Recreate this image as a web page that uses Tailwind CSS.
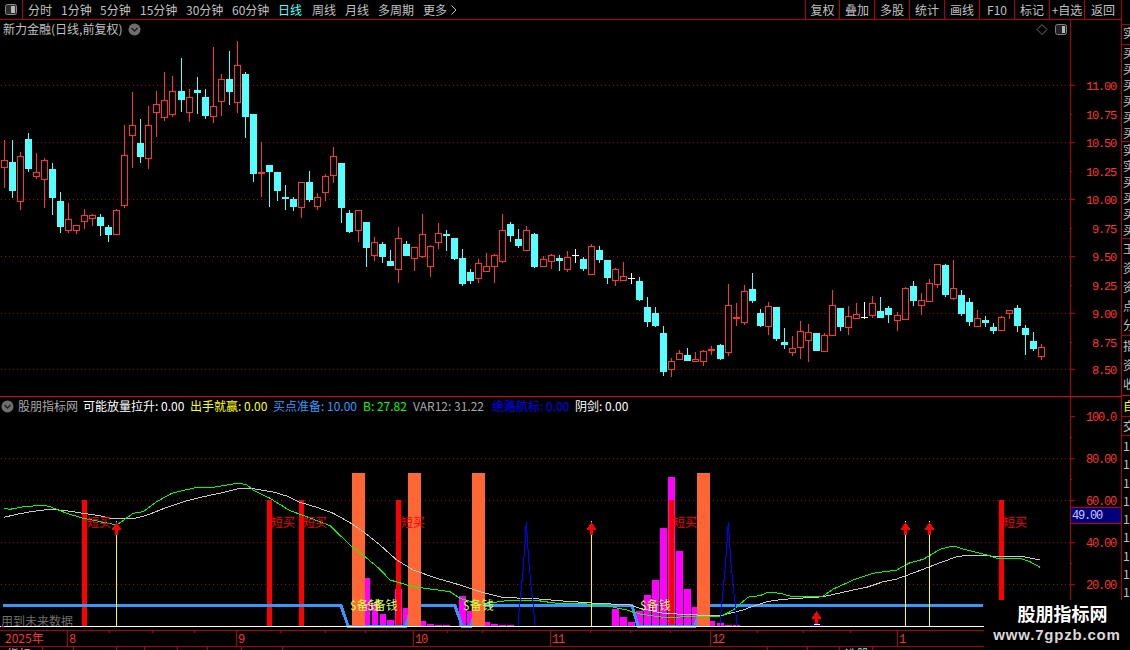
<!DOCTYPE html>
<html>
<head>
<meta charset="utf-8">
<script src="https://cdn.jsdelivr.net/npm/@tailwindcss/browser@4"></script>
</head>
<body class="bg-black">
<div class="relative flex w-[1130px] h-[650px] overflow-hidden bg-black text-[12px] leading-[16px] text-[#c0c0c0] font-['Noto_Sans_CJK_SC',sans-serif]">

  <!-- left: toolbar + panels -->
  <div class="w-[1122px] h-full border-r border-[#b00000] flex flex-col">
    <!-- toolbar -->
    <div class="h-[20px] border-b border-[#b00000] flex items-center shrink-0">
      <div class="w-[23px] h-[19px] border-r border-[#b00000] flex items-center justify-center">
        <svg width="13" height="12" viewBox="0 0 13 12"><rect x="0.5" y="0.5" width="11" height="10" rx="2" fill="#2c2c2c" stroke="#8a8a8a"/><rect x="6" y="2" width="4" height="7" fill="#b4b4b4"/></svg>
      </div>
      <div class="flex ml-[5px] whitespace-nowrap">
        <span class="w-[33px]">分时</span>
        <span class="w-[39px]">1分钟</span>
        <span class="w-[40px]">5分钟</span>
        <span class="w-[46px]">15分钟</span>
        <span class="w-[46px]">30分钟</span>
        <span class="w-[46px]">60分钟</span>
        <span class="w-[34px] text-[#54ffff]">日线</span>
        <span class="w-[33px]">周线</span>
        <span class="w-[33px]">月线</span>
        <span class="w-[45px]">多周期</span>
        <span class="flex items-center gap-[4px]">更多<svg width="6" height="10" viewBox="0 0 6 10"><path d="M0.5 0.5 L5 5 L0.5 9.5" fill="none" stroke="#c0c0c0"/></svg></span>
      </div>
      <div class="ml-auto flex h-[19px] whitespace-nowrap">
        <span class="w-[34px] border-l border-[#b00000] flex items-center justify-center">复权</span>
        <span class="w-[35px] border-l border-[#b00000] flex items-center justify-center">叠加</span>
        <span class="w-[35px] border-l border-[#b00000] flex items-center justify-center">多股</span>
        <span class="w-[35px] border-l border-[#b00000] flex items-center justify-center">统计</span>
        <span class="w-[35px] border-l border-[#b00000] flex items-center justify-center">画线</span>
        <span class="w-[35px] border-l border-[#b00000] flex items-center justify-center">F10</span>
        <span class="w-[35px] border-l border-[#b00000] flex items-center justify-center">标记</span>
        <span class="w-[35px] border-l border-[#b00000] flex items-center justify-center">+自选</span>
        <span class="w-[37px] border-l border-[#b00000] flex items-center justify-center">返回</span>
      </div>
    </div>

    <!-- price panel -->
    <div class="relative h-[376px] shrink-0">
      <svg class="absolute inset-0" width="1121" height="376" viewBox="0 20 1121 376" shape-rendering="crispEdges">
        <g id="grid1"></g>
        <rect x="1070" y="20" width="1" height="376" fill="#b00000"/>
        <g id="candles"></g>
        <g fill="#ff3232" font-family="Liberation Mono" font-size="12" letter-spacing="-1.2" text-anchor="end" text-rendering="geometricPrecision" shape-rendering="auto">
          <text x="1116" y="90">11.00</text>
          <text x="1116" y="119">10.75</text>
          <text x="1116" y="147">10.50</text>
          <text x="1116" y="176">10.25</text>
          <text x="1116" y="204">10.00</text>
          <text x="1116" y="233">9.75</text>
          <text x="1116" y="261">9.50</text>
          <text x="1116" y="290">9.25</text>
          <text x="1116" y="318">9.00</text>
          <text x="1116" y="347">8.75</text>
          <text x="1116" y="374">8.50</text>
        </g>
        <path d="M1042 24.5 L1047 29.5 L1042 34.5 L1037 29.5 Z" fill="none" stroke="#707070" shape-rendering="auto"/>
        <rect x="1055.5" y="24.5" width="11" height="10" rx="2" fill="#222" stroke="#808080" shape-rendering="auto"/>
        <rect x="1062" y="26" width="3" height="7" fill="#b4b4b4"/>
      </svg>
      <div class="relative flex items-center pl-[3px] h-[18px] whitespace-nowrap">
        <span class="w-[125px]">新力金融(日线,前复权)</span>
        <svg width="13" height="13" viewBox="0 0 13 13"><circle cx="6.5" cy="6.5" r="6" fill="#6e6e6e"/><path d="M3.5 5 L6.5 8 L9.5 5" fill="none" stroke="#1c1c1c" stroke-width="1.3"/></svg>
      </div>
    </div>

    <!-- indicator panel -->
    <div class="relative h-[234px] shrink-0 border-t border-[#e00000]">
      <svg class="absolute left-0 top-[-1px]" width="1121" height="234" viewBox="0 396 1121 234" shape-rendering="crispEdges">
        <g id="sub"></g>
        <g fill="#ff3232" font-family="Liberation Mono" font-size="12" letter-spacing="-1.2" text-anchor="end" shape-rendering="auto">
          <text x="1116" y="421">100.0</text>
          <text x="1116" y="463">80.00</text>
          <text x="1116" y="505">60.00</text>
          <text x="1116" y="547">40.00</text>
          <text x="1116" y="589">20.00</text>
        </g>
        <rect x="1071" y="507" width="50" height="17" fill="#00007f"/>
        <rect x="1071" y="507" width="50" height="1" fill="#c00000"/>
        <rect x="1071" y="523" width="50" height="1" fill="#c00000"/>
        <text x="1072" y="519" fill="#c8c8ff" font-family="Liberation Mono" font-size="12" letter-spacing="-1.2" shape-rendering="auto">49.00</text>
        <g fill="#ff0000" font-family="Noto Sans CJK SC" font-size="12" shape-rendering="auto">
          <text x="87" y="527">短买</text>
          <text x="271" y="527">短买</text>
          <text x="303" y="527">短买</text>
          <text x="401" y="527">短买</text>
          <text x="673" y="527">短买</text>
          <text x="1003" y="527">短买</text>
        </g>
        <g fill="#d8ff50" font-family="Noto Sans CJK SC" font-size="12" shape-rendering="auto">
          <text x="350" y="610">$备钱</text>
          <text x="367" y="610">$备钱</text>
          <text x="463" y="610">$备钱</text>
          <text x="640" y="610">$备钱</text>
        </g>
        <text x="1" y="626" fill="#6e6e6e" font-family="Noto Sans CJK SC" font-size="12" shape-rendering="auto">用到未来数据</text>
        <rect x="0" y="626" width="984" height="1" fill="#ffffff"/>
        <rect x="1" y="626" width="3" height="1" fill="#ff00ff"/>
      </svg>
      <div class="relative flex items-center h-[16px] mt-[1px] whitespace-nowrap">
        <span class="w-[15px] flex justify-center"><svg width="13" height="13" viewBox="0 0 13 13"><circle cx="6.5" cy="6.5" r="6" fill="#6e6e6e"/><path d="M3.5 5 L6.5 8 L9.5 5" fill="none" stroke="#1c1c1c" stroke-width="1.3"/></svg></span>
        <span class="w-[68px] pl-[3px] text-[#a8a8a8]">股朋指标网</span>
        <span class="w-[107px] text-white">可能放量拉升: 0.00</span>
        <span class="w-[83px] text-[#ffff00]">出手就赢: 0.00</span>
        <span class="w-[90px] text-[#3399ff]">买点准备: 10.00</span>
        <span class="w-[50px] text-[#00ff00]">B: 27.82</span>
        <span class="w-[79px] text-[#a8a8a8]">VAR12: 31.22</span>
        <span class="w-[83px] text-[#0000ff]">绝路航标: 0.00</span>
        <span class="text-white">阴剑: 0.00</span>
      </div>
    </div>

    <!-- time axis -->
    <div class="relative h-[17px] shrink-0 border-y border-[#b00000]">
      <svg class="absolute left-0 top-[-1px]" width="1121" height="17" viewBox="0 630 1121 17" shape-rendering="crispEdges">
        <g fill="#b00000">
          <rect x="67" y="630" width="1" height="17"/><rect x="236" y="630" width="1" height="17"/><rect x="413" y="630" width="1" height="17"/><rect x="550" y="630" width="1" height="17"/><rect x="710" y="630" width="1" height="17"/><rect x="897" y="630" width="1" height="17"/>
          <rect x="109" y="630" width="1" height="3"/><rect x="152" y="630" width="1" height="3"/><rect x="194" y="630" width="1" height="3"/><rect x="280" y="630" width="1" height="3"/><rect x="325" y="630" width="1" height="3"/><rect x="365" y="630" width="1" height="3"/><rect x="447" y="630" width="1" height="3"/><rect x="482" y="630" width="1" height="3"/><rect x="590" y="630" width="1" height="3"/><rect x="630" y="630" width="1" height="3"/><rect x="670" y="630" width="1" height="3"/><rect x="757" y="630" width="1" height="3"/><rect x="803" y="630" width="1" height="3"/><rect x="850" y="630" width="1" height="3"/>
        </g>
        <g fill="#ff3232" font-family="Liberation Mono" font-size="12" letter-spacing="-1.2" shape-rendering="auto">
          <text x="69" y="643">8</text><text x="238" y="643">9</text><text x="415" y="643">10</text><text x="552" y="643">11</text><text x="712" y="643">12</text><text x="899" y="643">1</text>
        </g>
        <text x="5" y="643" fill="#ff3232" font-family="Noto Sans CJK SC" font-size="12" shape-rendering="auto">2025年</text>
      </svg>
    </div>
    <!-- bottom tab row, cut by the window -->
    <div class="flex-1 flex overflow-hidden whitespace-nowrap">
      <span class="w-[43px] border-r border-[#b00000] pl-[7px] -mt-[1px] h-[20px]">指标</span>
      <span class="w-[31px] border-r border-[#b00000]"></span>
      <span class="w-[43px] border-r border-[#b00000]"></span>
      <span class="w-[28px] border-r border-[#b00000]"></span>
      <span class="w-[33px] border-r border-[#b00000]"></span>
      <span class="w-[30px] border-r border-[#b00000]"></span>
      <span class="w-[34px] border-r border-[#b00000]"></span>
      <span class="w-[41px] border-r border-[#b00000]"></span>
      <span class="w-[485px] border-r border-[#b00000]"></span>
      <span class="w-[40px] border-r border-[#b00000]"></span>
      <span class="w-[32px] border-r border-[#b00000]"></span>
      <span class="w-[33px] border-r border-[#b00000] pl-[5px] -mt-[1px] h-[20px] text-[#54ffff]">选股</span>
    </div>
  </div>

  <!-- right edge strip, cut by the window -->
  <div class="w-[8px] h-full overflow-hidden flex flex-col whitespace-nowrap leading-[16px]">
    <div class="h-[25px] border-b border-[#b00000] shrink-0"></div>
    <div class="h-[20px] border-b border-[#b00000] shrink-0 pl-[1px]">实</div>
    <div class="h-[97px] border-b border-[#b00000] shrink-0 pl-[1px]">买<br>买<br>买<br>买<br>买<br>买</div>
    <div class="h-[97px] border-b border-[#b00000] shrink-0 pl-[1px]">实<br>实<br>买<br>买<br>买<br>买</div>
    <div class="h-[97px] border-b border-[#b00000] shrink-0 pl-[1px] leading-[19px]">王<br>资<br>资<br>点<br>分</div>
    <div class="h-[60px] border-b border-[#e00000] shrink-0 pl-[1px] leading-[19px]">指<br>资<br>收</div>
    <div class="h-[21px] border-b border-[#b00000] shrink-0 pl-[1px] text-[#ffff00] leading-[20px]">自</div>
    <div class="h-[19px] border-b border-[#b00000] shrink-0 pl-[1px] leading-[18px]">交</div>
    <div class="pl-[1px] pt-[1px] leading-[18.3px]">1<br>1<br>1<br>1<br>1<br>1<br>1<br>1<br>1</div>
  </div>

  <!-- watermark lying over the corner -->
  <div class="absolute right-0 bottom-0 w-[146px] h-[50px] bg-black flex flex-col items-center whitespace-nowrap">
    <span class="text-[18px] leading-[26px] font-bold text-white pl-[11px]">股朋指标网</span>
    <span class="text-[15px] leading-[18px] font-bold tracking-[0.8px] text-[#d8d8d8] font-['Liberation_Sans',sans-serif]">www.7gpzb.com</span>
  </div>
</div>

<script>
// candle data: colour, high, body top, body bottom, low (measured rows)
var D=[
[40,'R',300,361,383,444,'C',300,366,453,474,'R',336,349,485,510,'C',279,297,387,396,'R',339,397,410,417,'R',354,361,419,504,'C',369,387,474,525,'C',456,483,561,579,'R',489,538,572,579,'R',556,556,572,582,'R',507,526,545,567,'R',522,526,536,558,'C',522,531,558,588,'C',555,561,585,606,'R',508,511,584,584,'R',255,346,497,504,'R',156,256,287,384,'C',237,309,351,369,'R',198,256,356,387,'R',153,193,218,291,'R',96,181,233,243,'R',108,154,224,231,'C',54,153,180,216,'R',147,172,218,246,'C',111,150,159,222,'C',147,171,228,237,'R',21,199,230,249,'R',102,118,185,228,'C',33,117,156,195,'R',3,76,188,219,'C',96,102,231,294,'C',222,222,402,426,'R',306,397,401,471,'C',375,375,396,501,'C',396,396,453,483,'C',435,471,477,510,'C',471,477,501,513,'R',427,427,503,534,'C',393,426,480,486,'R',460,472,500,510,'R',402,409,458,483,'R',321,349,407,429,'C',369,369,504,549,'C',510,519,576,580],
[200,'R',30,31,92,126,'C',66,66,144,201,'R',111,127,167,183,'C',127,132,171,189,'C',150,183,198,198,'R',81,115,209,249,'C',123,132,168,168,'R',142,142,176,213,'R',42,103,170,174,'R',136,139,200,231,'R',69,100,128,147,'C',90,102,108,153,'C',114,114,177,180,'C',147,174,252,258,'C',207,216,243,252,'R',177,190,236,249,'R',159,199,215,215,'R',162,166,200,249,'R',42,91,185,189,'C',66,72,108,126,'C',87,117,138,144,'R',78,91,152,152,'C',99,102,201,204,'R',168,178,200,200,'R',162,166,185,207,'C',165,174,183,213,'R',153,172,209,216,'W',147,165,167,189,'C',171,177,207,213,'R',132,139,224,224,'C',138,150,180,189,'C',180,180,234,252,'R',204,208,242,258,'R',186,229,242,242,'W',219,234,236,252,'C',231,243,300,303,'C',291,321,366,381,'C',321,339,378,381,'C',378,399,516,528,'R',474,484,510,531,'R',450,460,480,480,'C',444,465,483,483,'R',456,478,485,485],
[250,'R',300,304,335,348,'R',289,298,304,315,'C',282,285,327,330,'R',102,166,308,318,'R',159,202,206,228,'R',105,124,218,225,'C',69,117,153,159,'C',177,189,228,231,'R',156,169,230,255,'C',171,171,267,273,'C',234,276,285,297,'R',258,295,308,318,'R',213,244,293,327,'R',222,247,272,336,'C',249,249,303,303,'R',249,256,305,305,'R',120,166,257,257,'C',174,174,231,243,'R',168,199,233,255,'R',159,193,206,206,'W',156,202,204,207,'R',138,160,197,204,'C',141,183,204,204,'C',168,174,195,219,'R',186,196,212,243,'R',111,115,209,209,'C',93,108,153,168,'R',129,151,167,195,'R',87,100,155,155,'R',43,43,104,114,'C',42,45,135,141,'R',30,115,147,150,'C',120,135,192,198,'C',144,156,216,228,'R',180,205,230,231,'C',198,210,219,231,'C',219,231,243,252,'R',198,202,242,242,'R',180,181,193,207,'C',165,174,228,246,'C',225,234,255,315,'C',246,273,297,303,'R',282,292,320,330]
];
function R(x,y,w,h,f){return '<rect x="'+x+'" y="'+y+'" width="'+w+'" height="'+Math.max(h,0)+'" fill="'+f+'"/>';}
var s='',i=0;
D.forEach(function(g){
  var o=g[0];
  for(var k=1;k<g.length;k+=5){
    var t=g[k],hi=o+Math.round(g[k+1]/3),to=o+Math.round(g[k+2]/3),bo=o+Math.round(g[k+3]/3),lo=o+Math.round(g[k+4]/3);
    var x=4+8*i+(i>=22)+(i>=44)+(i>=67)+(i>=89)+(i>=111);
    if(t=='C'){
      s+=R(x,hi,1,lo-hi,'#54ffff')+R(x-3,to,7,Math.max(bo-to,2),'#54ffff');
    }else if(t=='W'){
      s+=R(x,hi,1,lo-hi,'#ffffff')+R(x-3,to,7,1,'#ffffff');
    }else{
      var c='#ff3232';
      s+=R(x,hi,1,to-hi,c)+R(x,bo,1,lo-bo,c);
      if(bo-to<3){s+=R(x-3,to,7,Math.max(bo-to,2),c);}
      else{s+='<rect x="'+(x-2.5)+'" y="'+(to+.5)+'" width="6" height="'+(bo-to-1)+'" fill="none" stroke="'+c+'"/>';}
    }
    i++;
  }
});
document.getElementById('candles').innerHTML=s;

function dots(ys){var r='';ys.forEach(function(y){for(var x=1;x<1070;x+=4){r+=R(x,y,1,1,'#a00000');}});return r;}
function ticks(list,w){var r='';list.forEach(function(y){r+=R(1070,y,w,1,'#b00000');});return r;}
document.getElementById('grid1').innerHTML=dots([85,142,199,256,313,369])+ticks([85,142,199,256,313,369],5)+ticks([114,171,228,285,342],2);

// indicator panel
var h='';
h+=dots([458,500,542,584]);
h+=R(1070,397,1,203,'#b00000')+ticks([416,458,500,542,584],5)+ticks([437,479,521,563],2);
// magenta volume columns: x, width, top
[[365,5,578],[372,6,603],[380,6,614],[387,7,620],[395,7,589],[403,5,608],[421,5,621],[427,7,624],[435,7,625],[443,7,625],[459,7,596],[467,5,611],[485,5,622],[491,7,624],[499,7,625],[507,7,625],[612,7,609],[620,7,617],[628,7,622],[636,7,611],[644,7,595],[652,7,580],[660,7,528],[668,7,477],[676,7,551],[684,7,589],[692,5,607],[710,5,621],[717,7,623],[725,7,625],[733,7,625]].forEach(function(b){h+=R(b[0],b[2],b[1],626-b[2],'#ff00ff');});
// red bars
[82,267,299,396,669,999].forEach(function(x){h+=R(x,500,5,126,'#ff0000');});
// thick blue line
h+='<polyline fill="none" stroke="#3399ff" stroke-width="3" points="3,605.5 341,605.5 348,626 406,626 412,605.5 455,605.5 462,626 471,626 477,605.5 632,605.5 638,626 695,626 701,605.5 983,605.5"/>';
// orange bars
[352,408,472,697].forEach(function(x){h+=R(x,473,13,153,'#ff6633');});
function pts(o,a){var r='';for(var k=0;k<a.length;k+=2){r+=(o[0]+a[k]/3).toFixed(1)+','+(o[1]+a[k+1]/3).toFixed(1)+' ';}return r;}
var gray=pts([0,470],[12,142,50,133,100,124,150,118,190,121,250,130,300,137,340,147,400,146,440,136,500,112,560,92,620,78,680,65,720,55,760,56,820,66,860,78,900,97,950,112,1000,130,1050,158,1090,185,1140,225])
 +pts([380,470],[50,270,100,300,170,325,240,345,300,365,370,383,450,385,550,393,650,400,750,405,780,415,850,430,950,435,1020,437,1090,420])
 +pts([750,390],[0,652,50,635,100,628,220,620,300,602,350,592,400,575,440,567,500,545,560,522,620,500,660,495,720,498,810,498,870,510]);
var green=pts([0,470],[12,115,30,118,70,110,130,106,150,110,200,130,250,145,300,155,350,165,400,130,430,125,470,95,515,70,590,52,640,52,700,42,720,40,740,44,760,60,810,85,870,122,920,140,990,167,1050,225,1095,260,1140,298])
 +pts([380,470],[30,330,100,350,210,365,240,385,300,403,380,392,460,390,530,400,660,403,740,420,780,432,850,442,950,440,1025,438,1060,420,1100,385])
 +pts([750,390],[0,620,30,617,55,606,90,610,120,618,220,618,250,597,310,570,370,550,440,540,480,518,520,508,570,478,610,468,650,480,720,497,740,505,760,505,810,505,840,515,870,532]);
h+='<polyline fill="none" stroke="#c8c8c8" points="'+gray+'"/>';
h+='<polyline fill="none" stroke="#00ff00" points="'+green+'"/>';
// blue spikes
var sp=[-24,468,-21,408,-18,388,-14,345,-9,290,-4,220,0,155,4,220,9,290,14,345,19,388,22,408,25,468];
[526.3,728.3].forEach(function(cx){h+='<polyline fill="none" stroke="#0000ff" points="'+pts([cx,470],sp)+'"/>';});
h+=R(810,625,13,1,'#0000ff')+R(814,624,6,1,'#ffffff');
// arrows
function arrow(x,top,bot,line){var r='';
  if(line){r+=R(x,top+13,1,bot-top-13,'#ffff00');r+=R(x,top-1,1,1,'#ffff00');}
  r+='<path d="M'+(x+.5)+' '+top+' L'+(x+5.5)+' '+(top+8)+' L'+(x+2)+' '+(top+8)+' L'+(x+2)+' '+(top+13)+' L'+(x-1)+' '+(top+13)+' L'+(x-1)+' '+(top+8)+' L'+(x-4.5)+' '+(top+8)+' Z" fill="#ff0000"/>';
  return r;}
[116,591,905,929].forEach(function(x){h+=arrow(x,522,626,true);});
h+=arrow(816,611,624,false);
document.getElementById('sub').innerHTML=h;
</script>
</body>
</html>
